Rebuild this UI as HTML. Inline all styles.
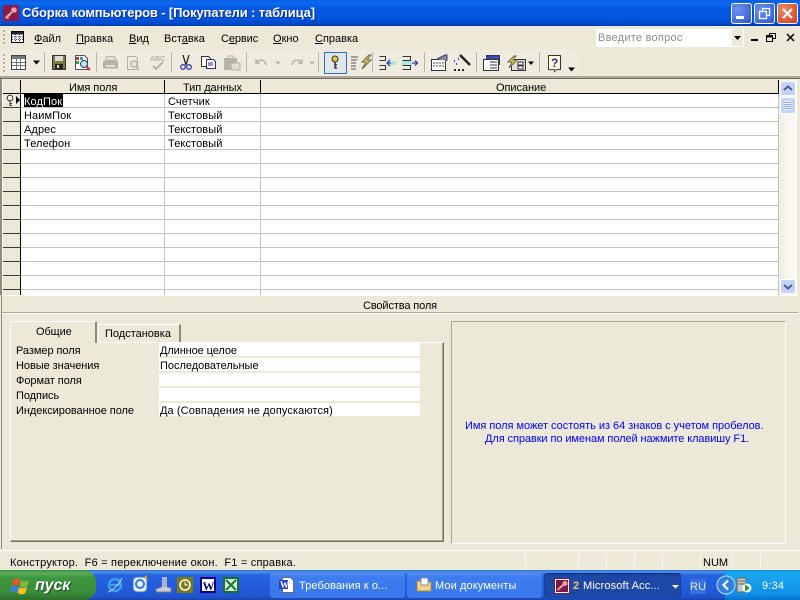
<!DOCTYPE html>
<html><head><meta charset="utf-8">
<style>
html,body{margin:0;padding:0;width:800px;height:600px;overflow:hidden;background:#ece9d8}
*{box-sizing:border-box}
#r{position:relative;width:800px;height:600px;overflow:hidden;font:11px "Liberation Sans",sans-serif;color:#000;background:#ece9d8}
.a{position:absolute}
.t{position:absolute;white-space:pre;line-height:14px;height:14px;margin-top:1px}
svg{position:absolute;overflow:visible}
u{text-decoration:underline}
</style></head><body><div id="r">

<!-- title bar -->
<div class="a" style="left:0;top:0;width:800px;height:26px;background:linear-gradient(#0a5be0 0,#0a6af0 3px,#0458e2 8px,#0355e0 18px,#0248c8 24px,#003aa8 26px)"></div>
<svg style="left:3px;top:5px" width="16" height="16" viewBox="0 0 16 16"><rect x="0" y="0" width="16" height="16" fill="#8a1c4c"/><circle cx="11" cy="5" r="2.800" fill="#e9a0a8"/><path d="M9 7L2.500 13M3.500 11.500l2 2M5.500 9.500l1.500 1.500" stroke="#e9a0a8" stroke-width="2" fill="none"/></svg>
<div class="t" style="left:22px;top:4px;height:16px;line-height:16px;font-size:13px;font-weight:bold;color:#fff;letter-spacing:-.14px;text-shadow:1px 1px 0 #0a2f9a">Сборка компьютеров - [Покупатели : таблица]</div>
<!-- window buttons -->
<div class="a" style="left:731px;top:3px;width:21px;height:21px;border:1px solid #fff;border-radius:3px;background:radial-gradient(circle at 30% 30%,#6e92f0,#2b55d0)"></div>
<div class="a" style="left:736px;top:16px;width:8px;height:3px;background:#fff"></div>
<div class="a" style="left:754px;top:3px;width:21px;height:21px;border:1px solid #fff;border-radius:3px;background:radial-gradient(circle at 30% 30%,#6e92f0,#2b55d0)"></div>
<svg style="left:758px;top:7px" width="14" height="14"><path d="M4.500 3.500V1.500H11.500V8.500H9" stroke="#fff" stroke-width="1.300" fill="none"/><rect x="1.500" y="4.500" width="7" height="7" stroke="#fff" stroke-width="1.300" fill="none"/></svg>
<div class="a" style="left:777px;top:3px;width:21px;height:21px;border:1px solid #fff;border-radius:3px;background:radial-gradient(circle at 30% 30%,#ec8a6a,#d23c18)"></div>
<svg style="left:780px;top:6px" width="15" height="15"><path d="M3 3L12 12M12 3L3 12" stroke="#fff" stroke-width="2.200"/></svg>

<!-- menu bar -->
<div class="a" style="left:3px;top:30px;width:2px;height:16px;background:repeating-linear-gradient(#b5b29f 0,#b5b29f 2px,#ece9d8 2px,#ece9d8 4px)"></div>
<svg style="left:11px;top:31px" width="14" height="13"><rect x=".5" y=".5" width="12" height="11" fill="#fff" stroke="#000"/><rect x="1" y="1" width="11" height="2.500" fill="#223"/><path d="M1 6h11M1 8.500h11M4.500 3v8M8.500 3v8" stroke="#444" stroke-width="1" stroke-dasharray="1 1"/></svg>
<div class="t" style="left:34px;top:31px"><u>Ф</u>айл</div>
<div class="t" style="left:76px;top:31px"><u>П</u>равка</div>
<div class="t" style="left:129px;top:31px"><u>В</u>ид</div>
<div class="t" style="left:164px;top:31px">Вст<u>а</u>вка</div>
<div class="t" style="left:221px;top:31px;letter-spacing:-.1px">С<u>е</u>рвис</div>
<div class="t" style="left:273px;top:31px"><u>О</u>кно</div>
<div class="t" style="left:315px;top:31px"><u>С</u>правка</div>
<!-- help box -->
<div class="a" style="left:596px;top:29px;width:148px;height:18px;background:#fff"></div>
<div class="a" style="left:732px;top:29px;width:11px;height:17px;background:#ece9d8"></div>
<svg style="left:734px;top:36px" width="8" height="5"><path d="M0 0h7L3.500 4z" fill="#000"/></svg>
<div class="t" style="left:598px;top:30px;color:#8e8e86;letter-spacing:.25px">Введите вопрос</div>
<div class="a" style="left:751px;top:39px;width:7px;height:2px;background:#000"></div>
<svg style="left:766px;top:33px" width="10" height="10"><path d="M3.500 2.500V.5H9.500V5.500H7" stroke="#000" fill="none"/><rect x=".5" y="2.500" width="6" height="6" stroke="#000" fill="none"/><rect x="1" y="3" width="5" height="1.500" fill="#000"/></svg>
<svg style="left:786px;top:33px" width="10" height="10"><path d="M1 1L8 8M8 1L1 8" stroke="#000" stroke-width="1.500"/></svg>

<!-- toolbar -->
<div class="a" style="left:0;top:50px;width:578px;height:26px;background:#efecdf"></div>
<div class="a" style="left:3px;top:54px;width:2px;height:18px;background:repeating-linear-gradient(#b5b29f 0,#b5b29f 2px,#efecdf 2px,#efecdf 4px)"></div>
<svg style="left:0;top:50px" width="800" height="26">
 <!-- separators -->
 <g stroke="#b8b6a4"><path d="M44.500 2v20M96.500 2v20M171.500 2v20M246.500 2v20M318.500 2v20M372.500 2v20M424.500 2v20M476.500 2v20M539.500 2v20"/></g>
 <!-- table view -->
 <rect x="11.500" y="5.500" width="14" height="14" fill="#fff" stroke="#444"/><rect x="12" y="6" width="13" height="3" fill="#777"/><path d="M12 12.500h13M12 15.500h13M16.500 9v10M20.500 9v10" stroke="#777"/>
 <path d="M33 10.500h7l-3.500 4z" fill="#000"/>
 <!-- save -->
 <rect x="52.500" y="5.500" width="13" height="14" fill="#7d7d3a" stroke="#333"/><rect x="55" y="6" width="8" height="5" fill="#ddd"/><rect x="55" y="14" width="8" height="5" fill="#222"/><rect x="57" y="15" width="2" height="3" fill="#ddd"/>
 <!-- search file -->
 <path d="M75.500 5.500h9l3 3v11h-12z" fill="#fff" stroke="#555"/><rect x="76" y="7" width="3" height="3" fill="#c33"/><rect x="80" y="7" width="3" height="3" fill="#39c"/><rect x="76" y="11" width="3" height="3" fill="#3a3"/><circle cx="84" cy="14" r="3.500" fill="#bfe3f5" stroke="#246"/><path d="M86.500 16.500L90 20" stroke="#c33" stroke-width="2"/>
 <!-- disabled print -->
 <path d="M103 12.500c0-1 1-2 2-2h11c1 0 2 1 2 2v6h-15z" fill="#b5b3a5"/><path d="M106.500 6.500h8l2 4h-11z" fill="#e4e2d4" stroke="#b5b3a5"/><rect x="106" y="15" width="9" height="2" fill="#e4e2d4"/>
 <path d="M127.500 6.500h8l2 2v11h-10z" fill="none" stroke="#b5b3a5"/><circle cx="134" cy="14" r="3" fill="none" stroke="#b5b3a5" stroke-width="1.500"/><path d="M136 16l3 4" stroke="#b5b3a5" stroke-width="1.500"/>
 <text x="150" y="11" font-size="7" font-weight="bold" fill="#b5b3a5" font-family="Liberation Sans">ABC</text><path d="M153 16l3 3 7-7" stroke="#b5b3a5" stroke-width="2" fill="none"/>
 <!-- scissors -->
 <path d="M183 5l3 10M189 5l-3 10" stroke="#222" stroke-width="1.300"/><circle cx="183" cy="17" r="2.300" fill="none" stroke="#3a3aa8" stroke-width="1.300"/><circle cx="189" cy="17" r="2.300" fill="none" stroke="#3a3aa8" stroke-width="1.300"/>
 <!-- copy -->
 <path d="M201.500 6.500h7l2 2v8h-9z" fill="#fff" stroke="#333"/><path d="M206.500 9.500h7l2 2v7h-9z" fill="#fff" stroke="#2a2a90"/><path d="M208 13h5M208 15h5" stroke="#2a2a90"/>
 <!-- paste disabled -->
 <rect x="224" y="8" width="13" height="12" rx="1" fill="#b5b3a5"/><rect x="228" y="6" width="5" height="3" fill="none" stroke="#b5b3a5"/><rect x="231" y="13" width="9" height="7" fill="#e0decf" stroke="#b5b3a5"/>
 <!-- undo redo -->
 <path d="M256 9v4h4M256 13c3-4 9-4 10 2" fill="none" stroke="#b5b3a5" stroke-width="1.500"/><path d="M275 11.500h6l-3 3z" fill="#b5b3a5"/>
 <path d="M302 9v4h-4M302 13c-3-4-9-4-10 2" fill="none" stroke="#b5b3a5" stroke-width="1.500"/><path d="M309 11.500h6l-3 3z" fill="#b5b3a5"/>
 <!-- key button -->
 <rect x="324.500" y="2.500" width="22" height="21" fill="#e1e6ea" stroke="#316ac5"/>
 <circle cx="335" cy="9" r="3" fill="#e8c840" stroke="#333"/><path d="M335 12v6.500M335 15h2M335 18h2" stroke="#333" stroke-width="1.500"/>
 <!-- indexes -->
 <path d="M351 7h7M351 10h6M351 13h5M351 16h5M351 19h5" stroke="#555"/><path d="M369 5l-7 7h4l-4 7 9-9h-4l4-5z" fill="#f2d848" stroke="#665"/>
 <!-- insert rows -->
 <path d="M379.500 6.500h6v4h-6M379.500 15.500h6v4h-6" fill="none" stroke="#333"/><path d="M396 13h-9m3-3l-3 3 3 3" stroke="#3a3aa8" stroke-width="1.300" fill="none"/><rect x="391" y="11" width="5" height="4" fill="#a8e8e0"/>
 <path d="M402.500 6.500h8v4h-8M402.500 15.500h8v4h-8" fill="none" stroke="#333"/><rect x="402" y="11" width="10" height="4" fill="#a8e8e0"/><path d="M412 13h5m-2-2.500l2.500 2.500-2.500 2.500" stroke="#3a3aa8" stroke-width="1.300" fill="none"/>
 <!-- properties -->
 <rect x="431.500" y="9.500" width="14" height="11" fill="#fff" stroke="#333"/><path d="M433 13h11M433 16h11" stroke="#444" stroke-dasharray="2 1"/><path d="M437 9l8-4h2v6" fill="#888" stroke="#3a3a90"/>
 <!-- wizard -->
 <path d="M460 5l10 10" stroke="#222" stroke-width="2.500"/><path d="M454 11h1M458 9h1M456 14h1" stroke="#3a3ad0" stroke-width="2"/><path d="M454 20h2M458 20h2M462 20h2" stroke="#222" stroke-width="2"/>
 <!-- db window -->
 <rect x="486.500" y="5.500" width="13" height="9" fill="#3a4aa8" stroke="#336"/><rect x="483.500" y="9.500" width="15" height="11" fill="#fff" stroke="#333"/><path d="M490 12h7M490 15h7M490 18h7" stroke="#333"/>
 <!-- new object -->
 <rect x="511.500" y="9.500" width="14" height="11" fill="#ddd" stroke="#333"/><rect x="518" y="12" width="5" height="3" fill="#fff" stroke="#333"/><rect x="518" y="16" width="5" height="3" fill="#fff" stroke="#333"/><path d="M514 6l-6 6h4l-3 6 8-8h-4l3-4z" fill="#f2d848" stroke="#665"/>
 <path d="M528 11.500h6l-3 3.500z" fill="#000"/>
 <!-- help -->
 <path d="M548.500 5.500h12v14h-4l-2 2v-2h-6z" fill="#fffcd8" stroke="#333"/><path d="M549 20h9" stroke="#99a"/><text x="551" y="17" font-size="12" font-weight="bold" fill="#2a2aa8" font-family="Liberation Sans">?</text>
 <path d="M568 17.500h7l-3.500 4z" fill="#000"/>
</svg>
<div class="a" style="left:0;top:76px;width:800px;height:3px;background:#aca899;border-bottom:1px solid #6f6d60"></div>

<!-- grid -->
<div class="a" style="left:0;top:79px;width:3px;height:216px;background:#8f8d7e;border-right:1px solid #fff"></div>
<div class="a" style="left:3px;top:80px;width:775px;height:215px;background:#fff;overflow:hidden">
 <div class="a" style="left:0;top:14px;width:17px;height:201px;background:repeating-linear-gradient(#ece9d8 0,#ece9d8 13px,#3a3a36 13px,#3a3a36 14px)"></div>
 <div class="a" style="left:17px;top:14px;width:758px;height:201px;background:repeating-linear-gradient(#fff 0,#fff 13px,#c4c4c0 13px,#c4c4c0 14px)"></div>
 <div class="a" style="left:0;top:0;width:775px;height:14px;background:#ece9d8;border-bottom:1px solid #000"></div>
 <div class="a" style="left:17px;top:0;width:1px;height:215px;background:#000"></div>
 <div class="a" style="left:161px;top:0;width:1px;height:14px;background:#000"></div>
 <div class="a" style="left:161px;top:14px;width:1px;height:201px;background:#c4c4c0"></div>
 <div class="a" style="left:257px;top:0;width:1px;height:14px;background:#000"></div>
 <div class="a" style="left:257px;top:14px;width:1px;height:201px;background:#c4c4c0"></div>
</div>
<div class="a" style="left:778px;top:80px;width:1px;height:14px;background:#000"></div>
<div class="a" style="left:778px;top:94px;width:1px;height:201px;background:#c4c4c0"></div>
<div class="t" style="left:69px;top:80px;letter-spacing:-.05px">Имя поля</div>
<div class="t" style="left:183px;top:80px;letter-spacing:-.05px">Тип данных</div>
<div class="t" style="left:496px;top:80px;letter-spacing:-.05px">Описание</div>
<svg style="left:5px;top:94px" width="16" height="13"><circle cx="5" cy="4" r="2.800" fill="#fff" stroke="#333"/><path d="M5 7v5M5 9.500h2M5 11.500h2" stroke="#333"/><path d="M11 2l4 4-4 4z" fill="#000"/></svg>
<div class="a" style="left:24px;top:94px;width:39px;height:13px;background:#000"></div>
<div class="t" style="left:24px;top:94px;color:#fff;letter-spacing:.1px">КодПок</div>
<div class="t" style="left:24px;top:108px;letter-spacing:.1px">НаимПок</div>
<div class="t" style="left:24px;top:122px;letter-spacing:.1px">Адрес</div>
<div class="t" style="left:24px;top:136px;letter-spacing:.1px">Телефон</div>
<div class="t" style="left:168px;top:94px;letter-spacing:.1px">Счетчик</div>
<div class="t" style="left:168px;top:108px;letter-spacing:.1px">Текстовый</div>
<div class="t" style="left:168px;top:122px;letter-spacing:.1px">Текстовый</div>
<div class="t" style="left:168px;top:136px;letter-spacing:.1px">Текстовый</div>

<!-- scrollbar -->
<div class="a" style="left:779px;top:80px;width:17px;height:215px;background:linear-gradient(90deg,#f0eee6,#fbfbf6)"></div>
<div class="a" style="left:780px;top:81px;width:16px;height:15px;border:1px solid #fff;border-radius:2px;background:#c3d3fd"></div>
<svg style="left:783px;top:85px" width="10" height="7"><path d="M1 5l4-3.500L9 5" stroke="#4d6185" stroke-width="2" fill="none"/></svg>
<div class="a" style="left:780px;top:97px;width:16px;height:17px;border:1px solid #fff;border-radius:2px;background:#c3d3fd"></div>
<div class="a" style="left:784px;top:101px;width:7px;height:9px;background:repeating-linear-gradient(#eef3ff 0,#eef3ff 1px,#8fa9e8 1px,#8fa9e8 2px)"></div>
<div class="a" style="left:780px;top:279px;width:16px;height:15px;border:1px solid #fff;border-radius:2px;background:#c3d3fd"></div>
<svg style="left:783px;top:284px" width="10" height="7"><path d="M1 1l4 3.500L9 1" stroke="#4d6185" stroke-width="2" fill="none"/></svg>
<div class="a" style="left:796px;top:79px;width:1px;height:216px;background:#fff"></div>
<div class="a" style="left:797px;top:79px;width:3px;height:216px;background:#ece9d8"></div>

<!-- properties heading -->
<div class="a" style="left:2px;top:295px;width:796px;height:1px;background:#fff"></div>
<div class="t" style="left:363px;top:298px;letter-spacing:-.12px">Свойства поля</div>
<div class="a" style="left:2px;top:312px;width:796px;height:1px;background:#aca899"></div>
<div class="a" style="left:2px;top:313px;width:796px;height:1px;background:#fff"></div>
<div class="a" style="left:1px;top:295px;width:1px;height:254px;background:#8f8d7e"></div>

<!-- tabs -->
<div class="a" style="left:10px;top:342px;width:434px;height:200px;border-top:1px solid #fff;border-left:1px solid #fff;border-right:1px solid #716f64;border-bottom:1px solid #716f64;box-shadow:inset -1px -1px 0 #aca899"></div>
<div class="a" style="left:98px;top:324px;width:83px;height:18px;border-top:1px solid #fff;border-right:2px solid #8a8878;border-left:1px solid #fff;background:#ece9d8"></div>
<div class="a" style="left:10px;top:321px;width:87px;height:22px;border-top:1px solid #fff;border-left:1px solid #fff;border-right:2px solid #8a8878;background:#ece9d8;border-radius:2px 2px 0 0"></div>
<div class="t" style="left:36px;top:324px;letter-spacing:-.1px">Общие</div>
<div class="t" style="left:105px;top:326px;letter-spacing:0">Подстановка</div>
<div class="a" style="left:159px;top:343px;width:261px;height:13px;background:#fff"></div>
<div class="a" style="left:159px;top:358px;width:261px;height:13px;background:#fff"></div>
<div class="a" style="left:159px;top:373px;width:261px;height:13px;background:#fff"></div>
<div class="a" style="left:159px;top:388px;width:261px;height:13px;background:#fff"></div>
<div class="a" style="left:159px;top:403px;width:261px;height:13px;background:#fff"></div>
<div class="t" style="left:16px;top:343px;letter-spacing:-.05px">Размер поля</div>
<div class="t" style="left:16px;top:358px;letter-spacing:-.05px">Новые значения</div>
<div class="t" style="left:16px;top:373px;letter-spacing:-.05px">Формат поля</div>
<div class="t" style="left:16px;top:388px;letter-spacing:-.05px">Подпись</div>
<div class="t" style="left:16px;top:403px;letter-spacing:-.05px">Индексированное поле</div>
<div class="t" style="left:160px;top:343px;letter-spacing:-.1px">Длинное целое</div>
<div class="t" style="left:160px;top:358px;letter-spacing:-.02px">Последовательные</div>
<div class="t" style="left:160px;top:403px;letter-spacing:.1px">Да (Совпадения не допускаются)</div>

<!-- hint panel -->
<div class="a" style="left:451px;top:321px;width:335px;height:223px;border-top:1px solid #aca899;border-left:1px solid #aca899;border-right:1px solid #fff;border-bottom:1px solid #fff"></div>
<div class="t" style="left:465px;top:418px;color:#0000ff;letter-spacing:-.03px">Имя поля может состоять из 64 знаков с учетом пробелов.</div>
<div class="t" style="left:485px;top:431px;color:#0000ff;letter-spacing:-.08px">Для справки по именам полей нажмите клавишу F1.</div>

<!-- status bar -->
<div class="a" style="left:0;top:550px;width:800px;height:1px;background:#fff"></div>
<div class="t" style="left:10px;top:555px;letter-spacing:.2px">Конструктор.  F6 = переключение окон.  F1 = справка.</div>
<div class="t" style="left:703px;top:555px">NUM</div>
<svg style="left:0;top:553px" width="800" height="17"><path d="M525.500 0v17M578.500 0v17M606.500 0v17M634.500 0v17M662.500 0v17M700.500 0v17M731.500 0v17M760.500 0v17" stroke="#f7f6ee"/></svg>

<!-- taskbar -->
<div class="a" style="left:0;top:570px;width:800px;height:30px;background:linear-gradient(#3168d5 0,#4993e6 2px,#2663e0 5px,#2157d7 24px,#1f4fc4 28px,#1941a5 30px)"></div>
<div class="a" style="left:0;top:570px;width:96px;height:30px;border-radius:0 12px 12px 0;background:linear-gradient(#388e3a 0,#5cae5c 3px,#3d963d 8px,#3c8f3c 22px,#2d6e2d 30px)"></div>
<svg style="left:11px;top:575px" width="20" height="20"><path d="M2 5c3-2 5-2 7 0l-1.500 6c-2-1.500-4-1.500-7 0z" fill="#e8542a"/><path d="M10 5c3 2 5 2 8 0l-1.500 6c-3 2-5 1.500-7.500 0z" fill="#7fba3a"/><path d="M.5 12c3-1.500 5-1.500 7 0L6 18c-2-2-4-1.500-7 0z" fill="#3a7fd8"/><path d="M8 12c2 1.500 5 1.500 8 0l-1.500 6c-3 2-5 1.500-8 0z" fill="#f5c020"/></svg>
<div class="t" style="left:35px;top:575px;height:19px;line-height:19px;font-size:16px;font-weight:bold;font-style:italic;color:#fff;letter-spacing:-.1px;text-shadow:1px 1px 1px #1c4a1c">пуск</div>
<!-- quick launch -->
<svg style="left:106px;top:574px" width="140" height="22">
 <circle cx="9" cy="11" r="6" fill="none" stroke="#3aa0e8" stroke-width="2.500"/><path d="M4 11h11" stroke="#3aa0e8" stroke-width="2"/><path d="M2 18c4-1 11-7 14-14" stroke="#a8d8f8" stroke-width="1" fill="none"/>
 <rect x="27" y="3" width="14" height="15" rx="4" fill="#e6f0f8" stroke="#3a70c8"/><circle cx="34" cy="10" r="4" fill="#e6f0f8" stroke="#2f7ce0" stroke-width="2"/><path d="M38 3l3-2v6z" fill="#e8a020"/>
 <path d="M50 15l8-3 7 2v4H50z" fill="#c8ccd8" stroke="#778"/><rect x="56" y="3" width="5" height="10" fill="#aab0d8"/>
 <rect x="71" y="3" width="16" height="16" fill="#7c7a10"/><circle cx="79" cy="11" r="5" fill="none" stroke="#fff" stroke-width="1.500"/><path d="M79 8v3h3" stroke="#fff" fill="none"/>
 <rect x="94" y="3" width="16" height="16" fill="#00008a"/><rect x="96" y="5" width="12" height="12" fill="#fff"/><text x="96.500" y="16" font-size="12" font-weight="bold" fill="#000080" font-family="Liberation Serif">W</text>
 <rect x="117" y="3" width="16" height="16" fill="#1c6c30"/><rect x="119" y="5" width="12" height="12" fill="#d8ecd8"/><path d="M120 6l10 10M130 6l-10 10" stroke="#117a30" stroke-width="2"/>
</svg>
<!-- task buttons -->
<div class="a" style="left:270px;top:573px;width:135px;height:25px;border-radius:3px;background:linear-gradient(#5c8df0 0,#3c7df0 4px,#3a78ec 100%)"></div>
<svg style="left:279px;top:577px" width="16" height="16"><path d="M3.500 .5h8l3 3v12h-11z" fill="#fff" stroke="#667"/><rect x="0" y="3" width="9" height="9" fill="#2342b8"/><text x="1" y="11" font-size="9" font-weight="bold" fill="#fff" font-family="Liberation Serif">W</text></svg>
<div class="t" style="left:299px;top:578px;color:#fff;letter-spacing:.1px">Требования к о...</div>
<div class="a" style="left:407px;top:573px;width:135px;height:25px;border-radius:3px;background:linear-gradient(#5c8df0 0,#3c7df0 4px,#3a78ec 100%)"></div>
<svg style="left:416px;top:577px" width="16" height="16"><path d="M1 4h5l1 1h8v9H1z" fill="#f2d58a" stroke="#a88838"/><rect x="5" y="1" width="7" height="7" fill="#fff" stroke="#889"/></svg>
<div class="t" style="left:435px;top:578px;color:#fff;letter-spacing:.1px">Мои документы</div>
<div class="a" style="left:544px;top:573px;width:137px;height:25px;border-radius:3px;background:#1e48a8;box-shadow:inset 0 1px 2px #122f78"></div>
<svg style="left:554px;top:578px" width="16" height="16"><rect x="0" y="0" width="16" height="16" fill="#7a1a4a"/><rect x="1" y="1" width="14" height="14" fill="#fff"/><rect x="2" y="2" width="12" height="12" fill="#7a1a4a"/><circle cx="11" cy="5.500" r="2.500" fill="#e9a0a8"/><path d="M9 7L3.500 12" stroke="#e9a0a8" stroke-width="2"/></svg>
<div class="t" style="left:573px;top:578px;color:#ffc060;font-weight:bold">2</div>
<div class="t" style="left:583px;top:578px;color:#fff;letter-spacing:.15px">Microsoft Acc...</div>
<svg style="left:672px;top:585px" width="8" height="5"><path d="M0 0h7L3.500 3.500z" fill="#fff"/></svg>
<div class="a" style="left:690px;top:579px;width:16px;height:15px;background:#3a70d8"></div>
<div class="t" style="left:690px;top:579px;color:#dbe8ff;font-size:11px;letter-spacing:.2px">RU</div>
<!-- tray -->
<div class="a" style="left:725px;top:570px;width:75px;height:30px;background:linear-gradient(#0f8fe0 0,#18a8f0 3px,#1290e8 24px,#0a70c8 30px)"></div>
<svg style="left:716px;top:575px" width="20" height="20"><circle cx="10" cy="10" r="9" fill="#2f80e0" stroke="#bfe0ff"/><path d="M12 5.500L7.500 10l4.500 4.500" stroke="#fff" stroke-width="2.200" fill="none"/></svg>
<svg style="left:736px;top:577px" width="18" height="18"><rect x="1" y="1" width="9" height="14" fill="#c8c8c8" stroke="#666"/><path d="M2 4h7M2 7h7" stroke="#666"/><circle cx="11" cy="11" r="4.500" fill="#fff"/><path d="M9 7.500l5 3.500-5 3.500z" fill="#1a9a30"/></svg>
<div class="t" style="left:762px;top:578px;color:#fff;letter-spacing:.2px">9:34</div>

</div></body></html>
